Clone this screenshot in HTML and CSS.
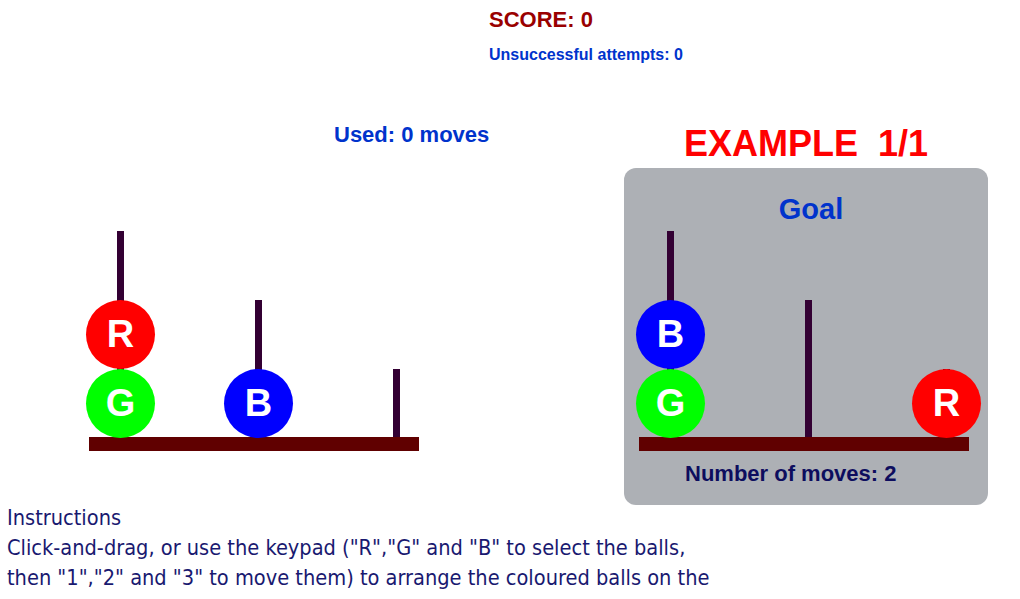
FILE: index.html
```html
<!DOCTYPE html>
<html lang="en">

<head>
    <meta charset="UTF-8">
    <meta name="viewport" content="width=device-width, initial-scale=1.0">
    <title>Ball sort</title>
    <link rel="stylesheet" href="styles.css">
</head>

<body>
    <header class="status">
        <div class="score">SCORE: 0</div>
        <div class="attempts">Unsuccessful attempts: 0</div>
    </header>

    <main class="games">
        <section class="play">
            <div class="used">Used: 0 moves</div>
            <div class="board">
                <div class="pegs">
                    <div class="peg cap3">
                        <div class="ball red">R</div>
                        <div class="ball green">G</div>
                    </div>
                    <div class="peg cap2">
                        <div class="ball blue">B</div>
                    </div>
                    <div class="peg cap1"></div>
                </div>
                <div class="base"></div>
            </div>
        </section>

        <section class="example">
            <h2 class="title">EXAMPLE&nbsp; 1/1</h2>
            <div class="goal">
                <h3>Goal</h3>
                <div class="board">
                    <div class="pegs">
                        <div class="peg cap3">
                            <div class="ball blue">B</div>
                            <div class="ball green">G</div>
                        </div>
                        <div class="peg cap2"></div>
                        <div class="peg cap1">
                            <div class="ball red">R</div>
                        </div>
                    </div>
                    <div class="base"></div>
                </div>
                <p class="needed">Number of moves: 2</p>
            </div>
        </section>
    </main>

    <div class="instructions">
        Instructions<br>
        Click-and-drag, or use the keypad ("R","G" and "B" to select the balls, then "1","2" and "3" to move them) to arrange the coloured balls on the pegs so that they end up in the same positions as in the goal example.
    </div>
</body>

</html>
```

FILE: styles.css
```css
* {
    margin: 0;
    padding: 0;
    box-sizing: border-box;
}

body {
    font-family: "Liberation Sans", Arial, sans-serif;
    background-color: #fff;
}

/* 顶部分数 */
.status {
    padding: 7px 0 0 489px;
    height: 115px;
}

.score {
    font-size: 22px;
    line-height: 26px;
    font-weight: 700;
    color: #990000;
}

.attempts {
    margin-top: 12px;
    font-size: 16px;
    line-height: 20px;
    font-weight: 700;
    color: #0033cc;
}

.games {
    display: flex;
    align-items: flex-start;
}

.play {
    width: 624px;
    padding-top: 7px;
}

.used {
    padding-left: 334px;
    font-size: 22px;
    line-height: 26px;
    font-weight: 700;
    color: #0033cc;
}

.play .board {
    margin: 83px 0 0 89px;
}

/* 球和柱子 */
.board {
    width: 330px;
}

.pegs {
    display: flex;
    align-items: flex-end;
    gap: 69px;
    margin-left: -3px;
}

.peg {
    flex-shrink: 0;
    width: 69px;
    display: flex;
    flex-direction: column;
    justify-content: flex-end;
    background: linear-gradient(to right, transparent 31px, #330033 31px, #330033 38px, transparent 38px);
}

.cap3 {
    height: 206px;
}

.cap2 {
    height: 137px;
}

.cap1 {
    height: 68px;
}

.ball {
    width: 69px;
    height: 69px;
    border-radius: 50%;
    display: flex;
    align-items: center;
    justify-content: center;
    color: #fff;
    font-size: 38px;
    font-weight: 700;
}

.ball:last-child {
    margin-bottom: -1px;
}

.red {
    background-color: #ff0000;
}

.green {
    background-color: #00ff00;
}

.blue {
    background-color: #0000ff;
}

.base {
    height: 14px;
    background-color: #600000;
}

/* 示例区域 */
.example {
    width: 364px;
    padding-top: 8px;
}

.title {
    text-align: center;
    font-size: 36px;
    line-height: 42px;
    font-weight: 700;
    color: #ff0000;
    margin-bottom: 3px;
}

.goal {
    height: 337px;
    background-color: #adb0b5;
    border-radius: 12px;
    padding: 25px 0 0 15px;
}

.goal h3 {
    text-align: center;
    padding-right: 5px;
    font-size: 29px;
    line-height: 32px;
    font-weight: 700;
    color: #0033cc;
}

.goal .board {
    margin-top: 6px;
}

.needed {
    margin-top: 10px;
    padding-left: 46px;
    font-size: 22px;
    line-height: 26px;
    font-weight: 700;
    color: #0d0d5e;
}

.instructions {
    width: 735px;
    margin-top: -2px;
    padding-left: 7px;
    font-family: "DejaVu Sans Condensed", "DejaVu Sans", sans-serif;
    font-size: 21.6px;
    line-height: 30px;
    color: #191970;
}
```
